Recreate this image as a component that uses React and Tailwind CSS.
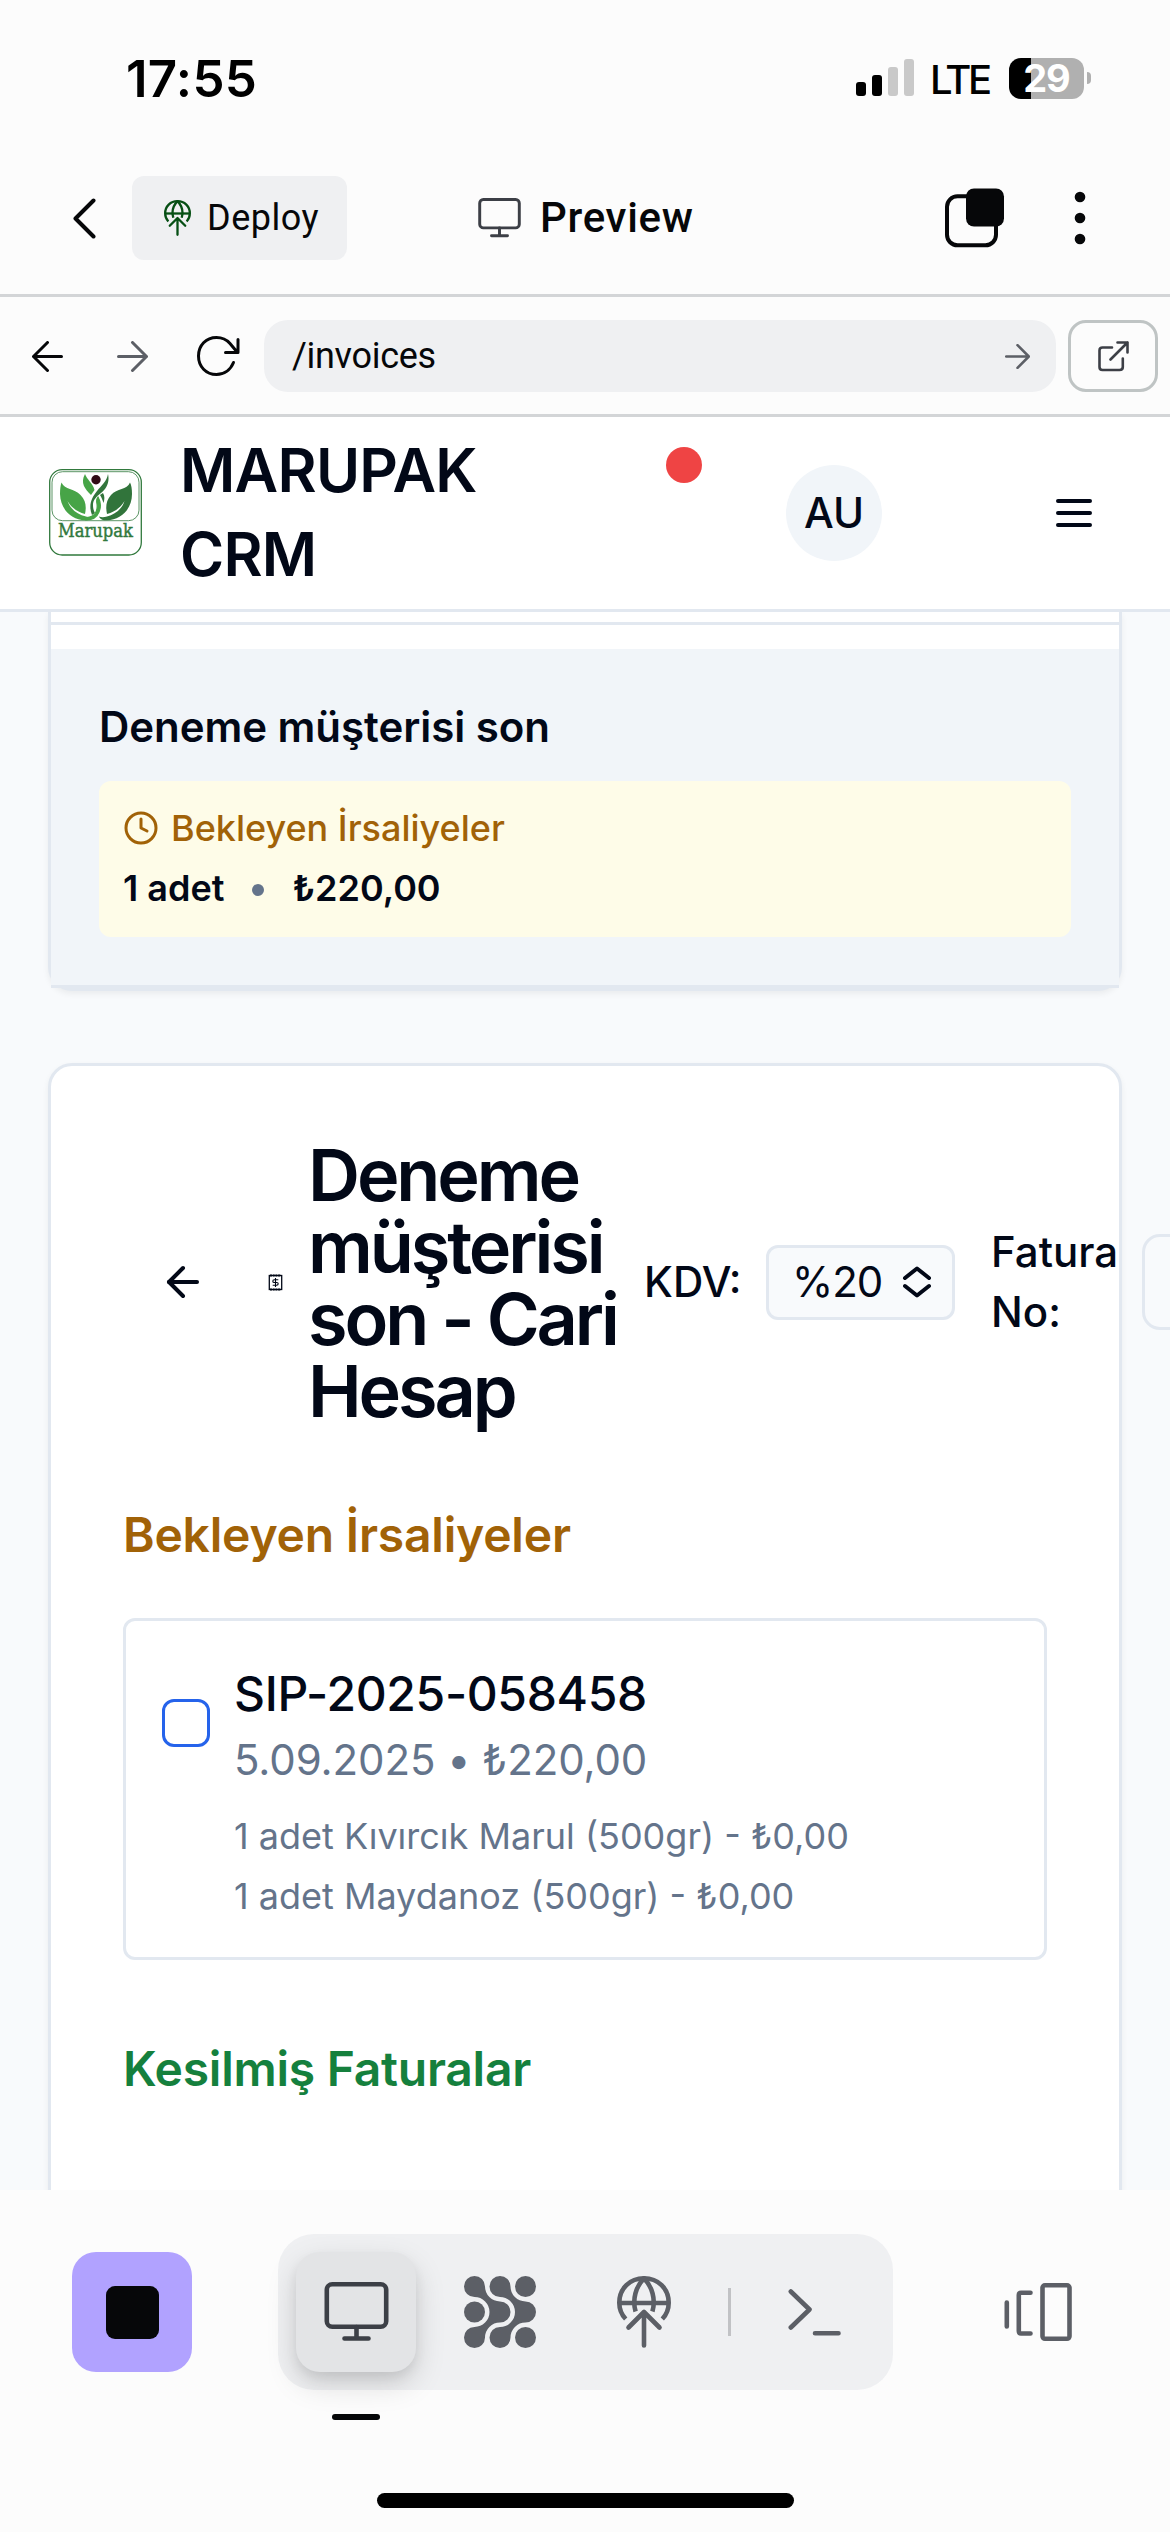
import React from "react";
import { ArrowLeft, Clock } from "lucide-react";

function GlobeUp({ className }) {
  return (
    <svg className={className} viewBox="0 0 54 72" fill="none" stroke="currentColor" strokeWidth="4.6" strokeLinecap="round" strokeLinejoin="round">
      <path strokeLinecap="butt" d="M8.7 43C4.3 38.4 2.3 33 2.3 26.7C2.3 12.5 13 2.3 27 2.3S51.7 12.5 51.7 26.7C51.7 33 49.7 38.4 45.3 43" />
      <path d="M2.3 27H51.7" strokeLinecap="butt" />
      <path strokeLinecap="butt" d="M18.6 35.5C15 23 19 10.500 27 2.300C35 10.500 39 23 35.400 35.500" />
      <path d="M27 69.500V37M11.500 51.500L27 36L42.500 51.500" />
    </svg>
  );
}

function Monitor({ className, sw }) {
  return (
    <svg className={className} viewBox="0 0 64 60" fill="none" stroke="currentColor" strokeWidth={sw} strokeLinecap="round" strokeLinejoin="round">
      <rect x="2.300" y="2.300" width="59.400" height="42.500" rx="5.500" />
      <path d="M32 45V56.500M20 56.500H44" />
    </svg>
  );
}

function Logo() {
  return (
    <svg className="ml-[49px] mt-[52px] h-[87px] w-[93px] shrink-0" viewBox="0 0 93 87" fill="none">
      <rect x="0.700" y="0.700" width="91.600" height="85.300" rx="12.500" fill="#fff" stroke="#31793d" strokeWidth="1.300" />
      <rect x="3" y="2.700" width="87" height="49" rx="10.500" stroke="#31793d" strokeWidth="0.800" />
      <path d="M12.500 13.500C16 21 25 19 31.500 26C37 31.500 37.500 38 36 45C28 43 22 38 18.500 32C21.500 40 28 45.500 37 47.500C40 48.500 43 48 46 46.500C44 50 41 51.300 36 51.300C22 51 11.500 40 11 25C11 20 11.500 16.500 12.500 13.500Z" fill="#47a447" />
      <path d="M81 13.500C78 21 68 19 62 26C57 31.500 56.500 38 58 45C66 43 72 38 75.500 32C73 40 66 45.500 58 47.500C55 48.500 52 48.500 50 47.500C51 50.500 54 51.300 58 51.300C72 51 83 40 83 25C83 20 82.500 16.500 81 13.500Z" fill="#31743b" />
      <path d="M36 5C38 11 44 14 45.500 21L42 26C36 20 31 14 36 5Z" fill="#47a447" />
      <path d="M59 5C61 14 57 20 52 24C47 28 44 31 44 36C44 40 45 42 46 44L43 46C39 36 43 28 48 22C52 17 58 12 59 5Z" fill="#31743b" />
      <path d="M49 28C52 33 52 38 50 43C48 48 44 51 37 51L38 48.500C45 48 49 43 48 35C47.500 32 47 30.500 49 28Z" fill="#47a447" stroke="#47a447" strokeWidth="1.200" />
      <path d="M54 24C56 27 55.500 31 54.500 34C53.500 31 52.500 28 51 26Z" fill="#31743b" />
      <circle cx="47" cy="10.700" r="4.700" fill="#300b15" />
      <text x="9" y="67.500" fontFamily="'DejaVu Serif', serif" fontSize="18.500" fill="#31793d" stroke="#31793d" strokeWidth="0.450" textLength="75" lengthAdjust="spacingAndGlyphs">Marupak</text>
    </svg>
  );
}

function StatusBar() {
  return (
    <div className="flex h-[156px] items-center text-black">
      <div className="ml-[126px] w-[730px] text-[51px] font-semibold leading-none tracking-[0.300px]">17:55</div>
      <div className="mt-[-1px] flex h-[37px] items-end gap-[6px]">
        <div className="h-[14px] w-[10px] rounded-[3px] bg-black" />
        <div className="h-[21px] w-[10px] rounded-[3px] bg-black" />
        <div className="h-[29px] w-[10px] rounded-[3px] bg-[#c9c9c9]" />
        <div className="h-[37px] w-[10px] rounded-[3px] bg-[#c9c9c9]" />
      </div>
      <div className="ml-[16px] mt-[3px] w-[79px] text-[40px] font-medium leading-none tracking-[-3.500px]">LTE</div>
      <div className="flex h-[41px] w-[75px] items-center justify-center rounded-[12px] bg-[linear-gradient(90deg,#000_22px,#b0b0b0_22px)]">
        <span className="text-[38px] font-bold leading-none tracking-[-1px] text-white">29</span>
      </div>
      <div className="ml-[3px] h-[12px] w-[4px] rounded-r-[4px] bg-[#b0b0b0]" />
    </div>
  );
}

function NavBar() {
  return (
    <div className="flex h-[141px] items-center border-b-[3px] border-[#d3d5d7] pb-[14px] font-['Roboto',sans-serif] text-[#060709]">
      <svg className="ml-[73px] h-[41px] w-[23px]" viewBox="0 0 23 41" fill="none" stroke="currentColor" strokeWidth="4" strokeLinecap="round" strokeLinejoin="round">
        <path d="M20.500 2.500L2.500 20.500L20.500 38.500" />
      </svg>
      <div className="ml-[36px] flex h-[84px] w-[215px] items-center rounded-[12px] bg-[#eff0f2]">
        <GlobeUp className="ml-[32px] h-[36px] w-[27px] text-[#064f14]" />
        <span className="ml-[16px] text-[36px] leading-none tracking-[0.500px]">Deploy</span>
      </div>
      <Monitor className="ml-[131px] h-[40px] w-[43px] text-[#3c3f46]" sw="4.400" />
      <span className="ml-[19px] w-[405px] text-[42px] font-medium leading-none tracking-[0.700px]">Preview</span>
      <svg className="h-[60px] w-[60px]" viewBox="0 0 60 60" fill="none">
        <rect x="2" y="8.300" width="49" height="49" rx="10.500" stroke="#060709" strokeWidth="4" />
        <rect x="21" y="0.500" width="38" height="38" rx="8" fill="#060709" />
      </svg>
      <svg className="ml-[69px] h-[54px] w-[12px]" viewBox="0 0 12 54" fill="currentColor">
        <circle cx="6" cy="6" r="5.300" />
        <circle cx="6" cy="27" r="5.300" />
        <circle cx="6" cy="48" r="5.300" />
      </svg>
    </div>
  );
}

function Arrow({ className, flip, sw }) {
  return (
    <svg className={className} viewBox="0 0 31 31" fill="none" stroke="currentColor" strokeWidth={sw} strokeLinecap="round" strokeLinejoin="round">
      <path d={flip ? "M1.500 15.500H29.500M15.500 1.500L29.500 15.500L15.500 29.500" : "M29.500 15.500H1.500M15.500 1.500L1.500 15.500L15.500 29.500"} />
    </svg>
  );
}

function UrlBar() {
  return (
    <div className="flex h-[120px] items-center border-b-[3px] border-[#d3d5d7] pt-px font-['Roboto',sans-serif] text-[#060709]">
      <Arrow className="ml-[32px] size-[31px]" sw="3" />
      <Arrow className="ml-[54px] size-[31px] text-[#5c5f66]" flip sw="3" />
      <svg className="ml-[48px] h-[42px] w-[44px]" viewBox="0 0 44 42" fill="none" stroke="currentColor" strokeWidth="3" strokeLinecap="round" strokeLinejoin="round">
        <path d="M42 4.500V17.500H29.500M41.500 17.500L34 8.500C30.500 4.500 26 2.500 20.500 2.500C10 2.500 2.500 10.500 2.500 21S10 39.500 20.500 39.500C28 39.500 34.500 35 37.500 27.500" />
      </svg>
      <div className="ml-[24px] flex h-[72px] w-[792px] items-center justify-between rounded-[24px] bg-[#eff0f2] pl-[28px] pr-[26px]">
        <span className="text-[36px] leading-none tracking-[-0.300px]">/invoices</span>
        <Arrow className="size-[25px] text-[#5c5f66]" flip sw="3.200" />
      </div>
      <div className="ml-[12px] flex h-[72px] w-[90px] items-center justify-center rounded-[18px] border-[3px] border-[#bfc4c4]">
        <svg className="size-[31px] text-[#3c3f46]" viewBox="0 0 31 31" fill="none" stroke="currentColor" strokeWidth="2.600" strokeLinecap="round" strokeLinejoin="round">
          <path d="M14 6.500H4.500C2.500 6.500 1.500 7.500 1.500 9.500V26C1.500 28 2.500 29 4.500 29H21.500C23.500 29 24.800 28 24.800 26V17.500M19.500 1.500H29.500V11.500M29.500 1.500L12.500 18.500" />
        </svg>
      </div>
    </div>
  );
}

function SiteHeader() {
  return (
    <div className="flex h-[195px] items-start border-b-[3px] border-[#e2e8f0] bg-white text-[#020817]">
      <Logo />
      <div className="ml-[38px] mt-[11px] w-[486px] text-[60px] font-semibold leading-[84px] tracking-[-0.750px]">
        MARUPAK
        <br />
        CRM
      </div>
      <div className="mt-[30px] size-[36px] rounded-full bg-[#ef4444]" />
      <div className="ml-[84px] mt-[48px] flex size-[96px] items-center justify-center rounded-full bg-[#f1f5f9] text-[42px] font-medium leading-none">AU</div>
      <svg className="ml-[168px] mt-[72px] size-[48px]" viewBox="0 0 24 24" fill="none" stroke="currentColor" strokeWidth="2" strokeLinecap="round">
        <path d="M4 6H20M4 12H20M4 18H20" />
      </svg>
    </div>
  );
}

function CustomerCard() {
  return (
    <div className="mx-[48px] h-[379px] rounded-b-[24px] border-x-[3px] border-b-[3px] border-[#e2e8f0] bg-white shadow-[0_3px_6px_rgba(0,0,0,0.06)]">
      <div className="h-[13px] border-b-[3px] border-[#e2e8f0]" />
      <div className="mt-[24px] h-[339px] border-b-[3px] border-[#e2e8f0] bg-[#f1f5f9] px-[48px] pt-[48px]">
        <div className="text-[42px] font-semibold leading-[60px] tracking-[-0.050px]">Deneme müşterisi son</div>
        <div className="mt-[24px] h-[156px] rounded-[12px] bg-[#fefce8] px-[24px] pt-[17px] text-[36px]">
          <div className="flex items-center gap-[12px] font-medium leading-[60px] text-[#a16207]">
            <Clock className="size-[36px]" strokeWidth={2} />
            Bekleyen İrsaliyeler
          </div>
          <div className="flex items-center font-semibold leading-[60px]">
            <span>1 adet</span>
            <span className="ml-[28px] mt-[4px] size-[12px] rounded-full bg-[#64748b]" />
            <span className="ml-[28px]">₺220,00</span>
          </div>
        </div>
      </div>
    </div>
  );
}

function AccountCard() {
  return (
    <div className="mx-[48px] mt-[72px] h-[1200px] rounded-[24px] border-[3px] border-[#e2e8f0] bg-white shadow-[0_3px_6px_rgba(0,0,0,0.06)]">
      <div className="mt-[72px] flex h-[288px] w-[1200px] items-center">
        <ArrowLeft className="ml-[108px] size-[48px] shrink-0" strokeWidth={2} />
        <svg className="ml-[61px] h-[17px] w-[15px] shrink-0" viewBox="0 0 15 17" fill="none" stroke="currentColor">
          <rect x="1.300" y="1.500" width="12.400" height="14" strokeWidth="1.300" />
          <path d="M2 1.500H13M2 15.500H13" strokeWidth="1.800" strokeDasharray="2 0.700" />
          <path d="M10.300 5.800H6.300C4.300 5.800 4.300 8.500 6.300 8.500H8.700C10.700 8.500 10.700 11.200 8.700 11.200H4.700M7.500 4V13" strokeWidth="1.100" />
        </svg>
        <h1 className="ml-[25px] mt-[2px] w-[336px] shrink-0 text-[72px] font-semibold leading-[72px] tracking-[-3.100px]">
          Deneme
          <br />
          müşterisi
          <br />
          son - Cari
          <br />
          Hesap
        </h1>
        <span className="w-[122px] shrink-0 text-[42px] font-medium leading-[60px]">KDV:</span>
        <div className="flex h-[75px] w-[189px] shrink-0 items-center rounded-[12px] border-[3px] border-[#e2e8f0] bg-[#f8fafc] pl-[23px] text-[42px] leading-none tracking-[-1px]">
          %20
          <svg className="ml-[20px] h-[32px] w-[30px]" viewBox="0 0 30 32" fill="none" stroke="currentColor" strokeWidth="4" strokeLinecap="round" strokeLinejoin="round">
            <path d="M3 12L15 2.500L27 12M3 20L15 29.500L27 20" />
          </svg>
        </div>
        <div className="ml-[36px] w-[151px] shrink-0 text-[42px] font-medium leading-[60px]">
          Fatura
          <br />
          No:
        </div>
        <div className="h-[96px] w-[180px] shrink-0 rounded-[18px] border-[3px] border-[#e2e8f0] bg-[#f8fafc]" />
      </div>

      <div className="px-[72px] pt-[73px]">
        <h2 className="text-[48px] font-semibold leading-[72px] tracking-[-0.200px] text-[#a16207]">Bekleyen İrsaliyeler</h2>
        <div className="mt-[47px] flex h-[342px] w-[924px] rounded-[12px] border-[3px] border-[#e2e8f0] pl-[36px] pt-[37px]">
          <div className="mt-[41px] size-[48px] rounded-[12px] border-[3px] border-[#2563eb]" />
          <div className="ml-[24px]">
            <div className="text-[48px] font-medium leading-[72px] tracking-[-0.350px]">SIP-2025-058458</div>
            <div className="text-[42px] leading-[60px] tracking-[-0.100px] text-[#64748b]">5.09.2025 • ₺220,00</div>
            <div className="mt-[16px] text-[36px] leading-[60px] text-[#64748b]">
              1 adet Kıvırcık Marul (500gr) - ₺0,00
              <br />1 adet Maydanoz (500gr) - ₺0,00
            </div>
          </div>
        </div>
        <h2 className="mt-[73px] text-[48px] font-semibold leading-[72px] tracking-[-0.250px] text-[#15803d]">Kesilmiş Faturalar</h2>
      </div>
    </div>
  );
}

function DotsIcon() {
  return (
    <svg className="size-[72px]" viewBox="0 0 72 72" fill="currentColor">
      <path d="M10.500 0A10.500 10.500 0 0 1 21 10.500A15 15 0 0 0 36 25.500A10.500 10.500 0 0 1 36 46.500A15 15 0 0 0 21 61.500A10.500 10.500 0 1 1 10.500 51A15 15 0 0 0 10.500 21A10.500 10.500 0 0 1 10.500 0Z" />
      <path transform="translate(25.500 0)" d="M10.500 0A10.500 10.500 0 0 1 21 10.500A15 15 0 0 0 36 25.500A10.500 10.500 0 0 1 36 46.500A15 15 0 0 0 21 61.500A10.500 10.500 0 1 1 10.500 51A15 15 0 0 0 10.500 21A10.500 10.500 0 0 1 10.500 0Z" />
      <circle cx="61.500" cy="10.500" r="10.500" />
      <circle cx="10.500" cy="36" r="10.500" />
      <circle cx="61.500" cy="61.500" r="10.500" />
    </svg>
  );
}

function BottomBar() {
  return (
    <div className="flex h-[342px] flex-col bg-[#fcfcfc] pt-[44px]">
      <div className="flex h-[156px] items-center text-[#5c5f66]">
        <div className="ml-[72px] flex size-[120px] items-center justify-center rounded-[24px] bg-[#b1a2ff]">
          <div className="size-[53px] rounded-[9px] bg-[#060709]" />
        </div>
        <div className="ml-[86px] flex h-[156px] w-[615px] items-center rounded-[36px] bg-[#eff0f2]">
          <div className="ml-[18px] flex size-[120px] items-center justify-center rounded-[24px] bg-[#e3e4e6] shadow-[0_12px_30px_rgba(0,0,0,0.150),0_6px_12px_rgba(0,0,0,0.070)]">
            <Monitor className="h-[60px] w-[65px] text-[#3c3f46]" sw="4.600" />
          </div>
          <div className="ml-[48px]">
            <DotsIcon />
          </div>
          <GlobeUp className="ml-[81px] h-[72px] w-[54px]" />
          <div className="ml-[57px] h-[48px] w-[3px] bg-[#c1c2c5]" />
          <svg className="ml-[57px] h-[48px] w-[54px]" viewBox="0 0 54 48" fill="none" stroke="currentColor" strokeWidth="4.600" strokeLinecap="round" strokeLinejoin="round">
            <path d="M2.800 3.500L21.500 21.500L2.800 39.500M27 45.200H50.500" />
          </svg>
        </div>
        <svg className="ml-[111px] h-[60px] w-[69px]" viewBox="0 0 69 60" fill="none" stroke="currentColor" strokeWidth="4.600" strokeLinecap="round" strokeLinejoin="round">
          <path d="M2.800 20.500V44.500M26.500 10.700H17C15.500 10.700 14.800 11.500 14.800 13V49C14.800 50.500 15.500 51.500 17 51.500H26.500" />
          <rect x="38.500" y="3.300" width="27" height="53.500" rx="2.500" />
        </svg>
      </div>
      <div className="ml-[332px] mt-[24px] h-[6px] w-[48px] rounded-full bg-[#060709]" />
      <div className="ml-[377px] mt-[73px] h-[15px] w-[417px] rounded-full bg-black" />
    </div>
  );
}

export default function App() {
  return (
    <div className="h-[2532px] w-[1170px] overflow-hidden bg-[#fcfcfc] font-['Inter',sans-serif]">
      <StatusBar />
      <NavBar />
      <UrlBar />
      <SiteHeader />
      <div className="h-[1578px] overflow-hidden bg-[#f8fafc] text-[#020817]">
        <CustomerCard />
        <AccountCard />
      </div>
      <BottomBar />
    </div>
  );
}
